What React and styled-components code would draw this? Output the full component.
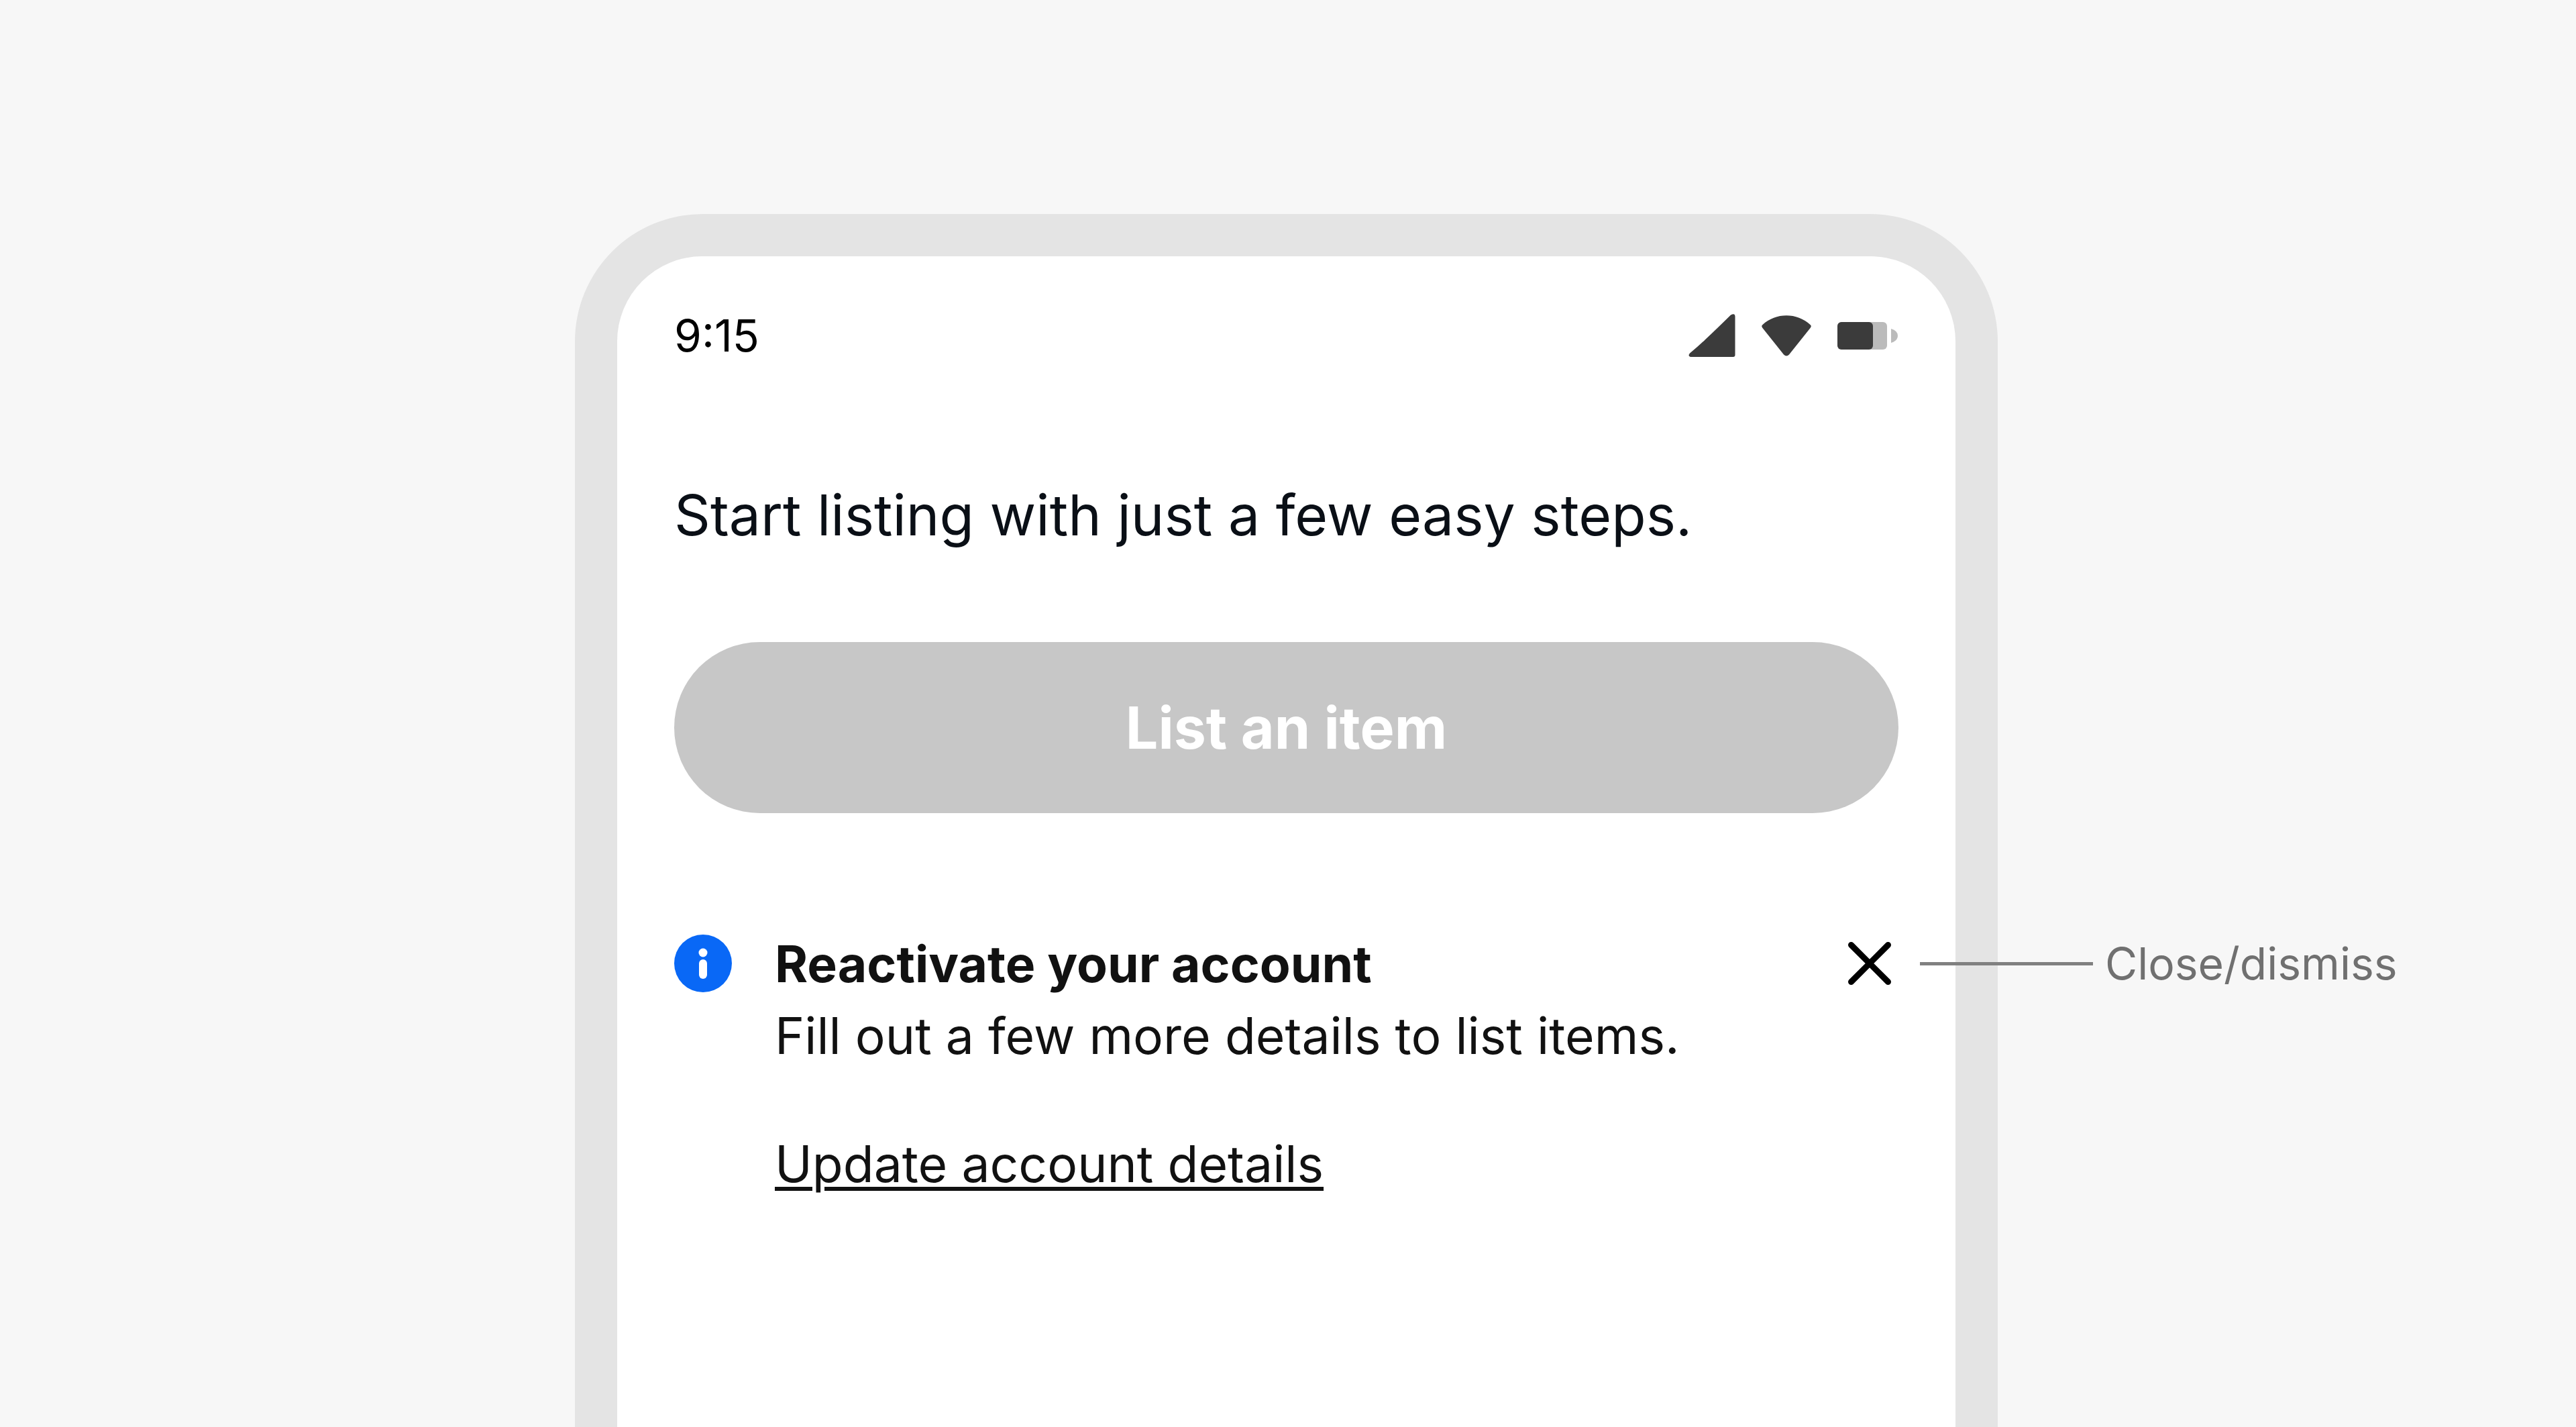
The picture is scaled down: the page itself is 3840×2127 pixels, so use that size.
import React from "react";
import styled, { createGlobalStyle } from "styled-components";

const GlobalStyle = createGlobalStyle`
  *, *::before, *::after { box-sizing: border-box; }
  body {
    margin: 0;
    background: #f7f7f7;
    font-family: Inter, "Liberation Sans", sans-serif;
    color: #111;
  }
  h1, h2, p { margin: 0; }
`;

const Stage = styled.main`
  min-height: 100vh;
  padding-top: 319px;
  display: grid;
  grid-template-columns: 857fr minmax(0, 2121px) 862fr;
  overflow: hidden;
`;

const Phone = styled.section`
  grid-column: 2;
  display: flex;
  flex-direction: column;
  padding: 66px 85px 0;
  border: 63px solid #e4e4e4;
  border-bottom: 0;
  border-radius: 190px 190px 0 0;
  background: #fff;
`;

const StatusBar = styled.header`
  display: flex;
  align-items: center;
  justify-content: space-between;
  height: 104px;
`;

const Time = styled.time`
  font-size: 66px;
  line-height: 104px;
  color: #000;
`;

const StatusIcons = styled.div`
  display: flex;
  align-items: center;
  gap: 38px;
`;

const Heading = styled.h1`
  margin-top: 160px;
  font-size: 84px;
  font-weight: 400;
  line-height: 112px;
  color: #0a0f16;
`;

const PrimaryButton = styled.button`
  margin-top: 133px;
  height: 255px;
  border: 0;
  border-radius: 128px;
  background: #c7c7c7;
  color: #fff;
  font: inherit;
  font-size: 86px;
  font-weight: 700;
  line-height: 112px;
`;

const Notice = styled.section`
  display: flex;
  align-items: flex-start;
  margin-top: 171px;
`;

const NoticeIcon = styled.svg`
  flex: none;
  margin: 10px 64px 0 0;
`;

const NoticeBody = styled.div`
  flex: 1;
`;

const NoticeTitle = styled.h2`
  font-size: 75px;
  font-weight: 700;
  line-height: 107px;
`;

const NoticeText = styled.p`
  font-size: 75px;
  line-height: 107px;
`;

const NoticeLink = styled.a`
  display: inline-block;
  margin-top: 84px;
  font-size: 75px;
  line-height: 107px;
  color: inherit;
  text-decoration: underline;
  text-decoration-thickness: 6px;
  text-underline-offset: 7px;
`;

const CloseSlot = styled.div`
  position: relative;
  flex: none;
  margin-top: 10px;
`;

const CloseButton = styled.button`
  display: block;
  padding: 0;
  border: 0;
  background: none;
  color: #000;

  svg { display: block; }
`;

const Callout = styled.div`
  position: absolute;
  top: 0;
  left: 100%;
  height: 86px;
  padding-left: 32px;
  display: flex;
  align-items: center;
  gap: 18px;
  font-size: 66px;
  line-height: 86px;
  color: #707070;
  white-space: nowrap;
`;

const Leader = styled.span`
  width: 258px;
  height: 5px;
  background: #808080;
`;

function SignalIcon() {
  return (
    <svg width="70" height="64" viewBox="0 0 70 64" aria-hidden="true">
      <path d="M63 1.500 Q69.500 -2 69.500 4 V61 Q69.500 64 66.500 64 H3 Q-1.500 62.500 2 58.500 C22 42 42 22 63 1.500 Z" fill="#3b3b3b" />
    </svg>
  );
}

function WifiIcon() {
  return (
    <svg width="76" height="64" viewBox="0 0 76 64" aria-hidden="true">
      <path d="M2.500 16 C22 -2.500 54 -2.500 73.500 16 Q76 18 73.500 21 L42 60.500 Q38 64.500 34 60.500 L2.500 21 Q0 18 2.500 16 Z" fill="#3b3b3b" />
    </svg>
  );
}

function BatteryIcon() {
  return (
    <svg width="91" height="64" viewBox="0 0 91 64" aria-hidden="true">
      <rect x="0" y="12" width="74" height="41" rx="6" fill="#bbb" />
      <rect x="0" y="12" width="53" height="41" rx="6" fill="#3b3b3b" />
      <path d="M80 22 Q90 25 90 32.500 Q90 40 80 43 Z" fill="#bbb" />
    </svg>
  );
}

function InfoIcon() {
  return (
    <NoticeIcon width="86" height="86" viewBox="0 0 86 86" aria-hidden="true">
      <circle cx="43" cy="43" r="43" fill="#0968f6" />
      <circle cx="43" cy="27" r="6.500" fill="#fff" />
      <rect x="37" y="37" width="12" height="29" rx="6" fill="#fff" />
    </NoticeIcon>
  );
}

function CloseIcon() {
  return (
    <svg width="86" height="86" viewBox="0 0 86 86" aria-hidden="true">
      <path d="M15.500 15.500 L70.500 70.500 M70.500 15.500 L15.500 70.500" stroke="currentColor" strokeWidth="9" strokeLinecap="round" />
    </svg>
  );
}

export default function App() {
  return (
    <>
      <GlobalStyle />
      <Stage>
        <Phone>
          <StatusBar>
            <Time>9:15</Time>
            <StatusIcons>
              <SignalIcon />
              <WifiIcon />
              <BatteryIcon />
            </StatusIcons>
          </StatusBar>
          <Heading>Start listing with just a few easy steps.</Heading>
          <PrimaryButton type="button" disabled>List an item</PrimaryButton>
          <Notice>
            <InfoIcon />
            <NoticeBody>
              <NoticeTitle>Reactivate your account</NoticeTitle>
              <NoticeText>Fill out a few more details to list items.</NoticeText>
              <NoticeLink href="#account">Update account details</NoticeLink>
            </NoticeBody>
            <CloseSlot>
              <CloseButton type="button" aria-label="Close">
                <CloseIcon />
              </CloseButton>
              <Callout>
                <Leader />
                <span>Close/dismiss</span>
              </Callout>
            </CloseSlot>
          </Notice>
        </Phone>
      </Stage>
    </>
  );
}
